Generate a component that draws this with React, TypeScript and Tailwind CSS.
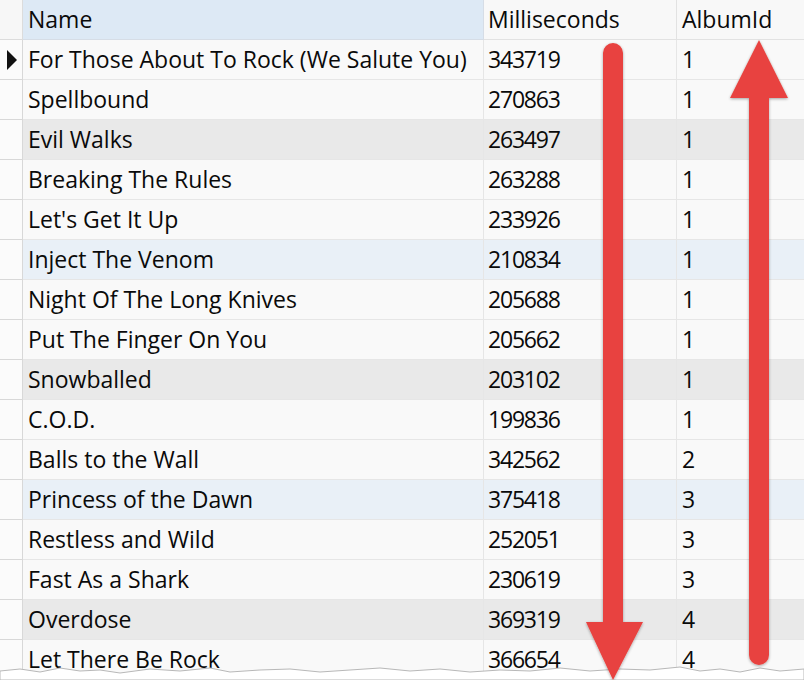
import React from "react";

const rows: [string, string, string][] = [
  ["For Those About To Rock (We Salute You)", "343719", "1"],
  ["Spellbound", "270863", "1"],
  ["Evil Walks", "263497", "1"],
  ["Breaking The Rules", "263288", "1"],
  ["Let's Get It Up", "233926", "1"],
  ["Inject The Venom", "210834", "1"],
  ["Night Of The Long Knives", "205688", "1"],
  ["Put The Finger On You", "205662", "1"],
  ["Snowballed", "203102", "1"],
  ["C.O.D.", "199836", "1"],
  ["Balls to the Wall", "342562", "2"],
  ["Princess of the Dawn", "375418", "3"],
  ["Restless and Wild", "252051", "3"],
  ["Fast As a Shark", "230619", "3"],
  ["Overdose", "369319", "4"],
  ["Let There Be Rock", "366654", "4"],
];

export default function App() {
  return (
    <div
      className="relative w-[804px] h-[680px] overflow-hidden bg-white text-[#0a0a0a]"
      style={{ fontFamily: '"Open Sans", "Noto Sans", sans-serif' }}
    >
      <div className="grid grid-cols-[23px_461px_193px_127px] text-[23px] leading-none">
        <div className="h-[40px] border-r border-b border-[#dcdcdc] bg-[#f7f7f7]" />
        <div className="h-[40px] border-r border-b border-[#d6dde6] bg-[#dde9f5] flex items-center pl-[5px]">Name</div>
        <div className="h-[40px] border-r border-b border-[#e2e2e2] bg-[#f8f8f8] flex items-center pl-[4px]">Milliseconds</div>
        <div className="h-[40px] border-b border-[#e2e2e2] bg-[#f8f8f8] flex items-center pl-[5px]">AlbumId</div>
        {rows.map((r, i) => {
          const bg =
            i % 6 === 2 ? "bg-[#e9e9e9]" : i % 6 === 5 ? "bg-[#e9f0f7]" : "bg-[#f9f9f9]";
          return (
            <React.Fragment key={i}>
              <div className="h-[40px] border-r border-b border-[#d8d8d8] bg-[#fbfbfb] flex items-center pl-[6px]">
                {i === 0 && (
                  <svg width="12" height="20" viewBox="0 0 12 20">
                    <path d="M1 0 L11 10 L1 20 Z" fill="#111" />
                  </svg>
                )}
              </div>
              <div className={`h-[40px] border-r border-b border-[#e6e6e6] ${bg} flex items-center pl-[5px]`}>{r[0]}</div>
              <div className={`h-[40px] border-r border-b border-[#e6e6e6] ${bg} flex items-center pl-[4px] tracking-[-1.2px]`}>{r[1]}</div>
              <div className={`h-[40px] border-b border-[#e6e6e6] ${bg} flex items-center pl-[5px]`}>{r[2]}</div>
            </React.Fragment>
          );
        })}
      </div>

      <svg className="absolute left-0 top-0" width="804" height="680" viewBox="0 0 804 680">
        <defs>
          <filter id="sh" x="-50%" y="-10%" width="200%" height="120%">
            <feGaussianBlur in="SourceAlpha" stdDeviation="1.5" />
            <feOffset dx="0" dy="1" />
            <feComponentTransfer>
              <feFuncA type="linear" slope="0.35" />
            </feComponentTransfer>
            <feMerge>
              <feMergeNode />
              <feMergeNode in="SourceGraphic" />
            </feMerge>
          </filter>
        </defs>
        <path
          d="M0 671 L20 669 L40 672 L60 668 L80 671 L100 670 L120 673 L150 669 L180 671 L210 668 L230 672 L260 670 L290 669 L320 672 L350 670 L380 668 L410 671 L440 669 L470 672 L500 670 L530 671 L560 668 L590 671 L620 669 L650 670 L680 667 L700 671 L720 669 L740 672 L760 668 L780 671 L804 669 L804 680 L0 680 Z"
          fill="#ffffff"
          stroke="#b8b8b8"
          strokeWidth="1"
        />
        <g filter="url(#sh)">
          <path
            d="M603 53 A10 10 0 0 1 623 53 L623 622 L643 622 L613 680 L586 622 L603 622 Z"
            fill="#e8433f"
          />
        </g>
        <g filter="url(#sh)">
          <path
            d="M759 40 L788 98 L769 98 L769 655 A10 10 0 0 1 749 655 L749 98 L730 98 Z"
            fill="#e8433f"
          />
        </g>
      </svg>
    </div>
  );
}
